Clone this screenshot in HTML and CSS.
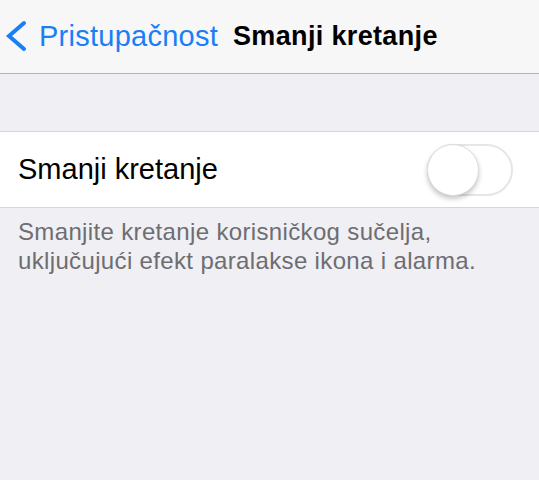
FILE: index.html
```html
<!DOCTYPE html>
<html lang="hr">
<head>
<meta charset="utf-8">
<title>Smanji kretanje</title>
<link rel="stylesheet" href="styles.css">
</head>
<body>
  <header class="navbar">
    <a class="back" href="#">
      <svg class="chevron" width="22" height="32" viewBox="0 0 22 32" aria-hidden="true">
        <polyline points="19,3 4,16 19,29" fill="none" stroke="#1a7ff6" stroke-width="4" stroke-linecap="round" stroke-linejoin="miter"/>
      </svg>
      <span class="back-label">Pristupačnost</span>
    </a>
    <h1 class="title">Smanji kretanje</h1>
  </header>

  <main class="content">
    <section class="group">
      <div class="cell">
        <span class="cell-label">Smanji kretanje</span>
        <span class="switch" role="switch" aria-checked="false">
          <span class="knob"></span>
        </span>
      </div>
    </section>
    <p class="footer-note">Smanjite kretanje korisničkog sučelja,<br>uključujući efekt paralakse ikona i alarma.</p>
  </main>
</body>
</html>
```

FILE: styles.css
```css
html, body {
  margin: 0;
  padding: 0;
}

body {
  background: #f0eff4;
  font-family: "Liberation Sans", Arial, Helvetica, sans-serif;
  color: #000;
  width: 539px;
  height: 480px;
  overflow: hidden;
}

/* top navigation bar */
.navbar {
  height: 73px;
  background: #f7f7f7;
  border-bottom: 1px solid #b4b4b6;
  display: flex;
  align-items: center;
  padding-left: 5px;
  box-sizing: content-box;
}

.back {
  display: flex;
  align-items: center;
  text-decoration: none;
  color: #1a7ff6;
}

.chevron {
  display: block;
  margin-right: 12px;
  margin-top: -1px;
}

.back-label {
  font-size: 29px;
  line-height: 34px;
  letter-spacing: 0.25px;
  margin-top: -2px;
}

.title {
  margin: -1px 0 0 15px;
  font-size: 27px;
  line-height: 32px;
  font-weight: bold;
  letter-spacing: 0.35px;
}

/* grouped table */
.content {
  padding-top: 57px;
}

.group {
  background: #fff;
  border-top: 1px solid #d6d5da;
  border-bottom: 1px solid #d6d5da;
}

.cell {
  height: 75px;
  display: flex;
  align-items: center;
  justify-content: space-between;
  padding: 0 26px 0 18px;
}

.cell-label {
  font-size: 29px;
}

.switch {
  position: relative;
  width: 86px;
  height: 52px;
  box-sizing: border-box;
  border: 2px solid #e6e6e8;
  border-radius: 26px;
  background: #fff;
}

.knob {
  position: absolute;
  left: -2px;
  top: -2px;
  width: 52px;
  height: 52px;
  box-sizing: border-box;
  border-radius: 50%;
  background: #fff;
  border: 1px solid #dcdcdc;
  box-shadow: 0 3px 5px rgba(0, 0, 0, 0.22);
}

.footer-note {
  margin: 0;
  padding: 9px 18px 0;
  font-size: 24px;
  line-height: 29px;
  letter-spacing: 0.35px;
  color: #6d6d72;
}
```
